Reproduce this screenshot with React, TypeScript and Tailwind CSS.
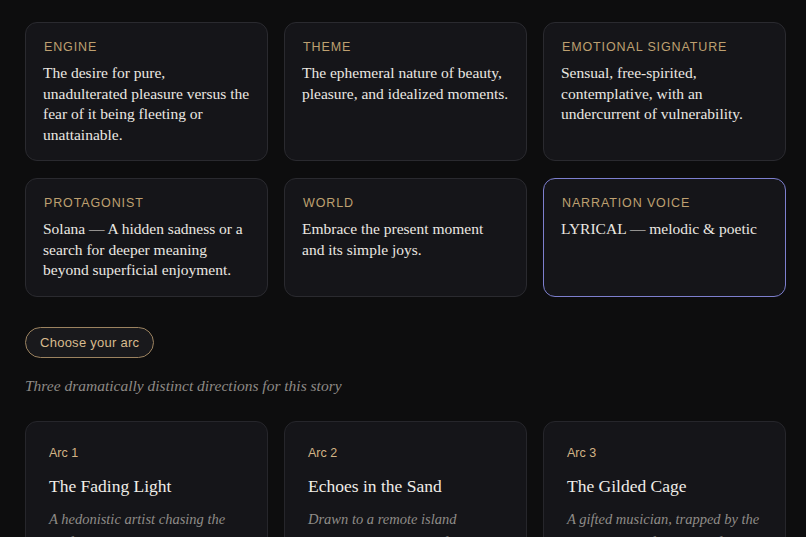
const serif = "font-['Georgia','Liberation_Serif',serif]"
const sans = "font-['Liberation_Sans','Helvetica',sans-serif]"

const traits = [
  {
    label: 'Engine',
    text: 'The desire for pure, unadulterated pleasure versus the fear of it being fleeting or unattainable.',
  },
  { label: 'Theme', text: 'The ephemeral nature of beauty, pleasure, and idealized moments.' },
  {
    label: 'Emotional Signature',
    text: 'Sensual, free-spirited, contemplative, with an undercurrent of vulnerability.',
  },
  {
    label: 'Protagonist',
    text: 'Solana — A hidden sadness or a search for deeper meaning beyond superficial enjoyment.',
  },
  { label: 'World', text: 'Embrace the present moment and its simple joys.' },
  { label: 'Narration Voice', text: 'LYRICAL — melodic & poetic', active: true },
]

const arcs = [
  {
    n: 1,
    title: 'The Fading Light',
    desc: 'A hedonistic artist chasing the perfect moment realizes that every sunset she paints is already gone.',
  },
  {
    n: 2,
    title: 'Echoes in the Sand',
    desc: 'Drawn to a remote island paradise, she searches for a joy that never seems to stay.',
  },
  {
    n: 3,
    title: 'The Gilded Cage',
    desc: 'A gifted musician, trapped by the expectations of a gilded life, longs to break free.',
  },
]

function TraitCard({ label, text, active }: { label: string; text: string; active?: boolean }) {
  return (
    <div
      className={`rounded-xl border bg-[#151519] px-[17px] pt-4 pb-[15px] ${
        active ? 'border-[#7d7fce]' : 'border-[#2a2a2f]'
      }`}
    >
      <div className={`${sans} px-px text-[12.5px] leading-4 uppercase tracking-[0.07em] text-[#bea070]`}>
        {label}
      </div>
      <p className={`${serif} mt-2 text-[15.5px] leading-[20.5px] text-[#ebe8e2]`}>{text}</p>
    </div>
  )
}

function ArcCard({ n, title, desc }: { n: number; title: string; desc: string }) {
  return (
    <div className="rounded-xl border border-[#26262b] bg-[#151519] px-[23px] pt-[23px] pb-6">
      <div className={`${sans} text-[12.5px] leading-4 text-[#d2b385]`}>Arc {n}</div>
      <h3 className={`${serif} mt-[13px] text-[17.5px] leading-6 text-[#f0ede8]`}>{title}</h3>
      <p className={`${serif} mt-[10px] text-[14.5px] italic leading-[23px] text-[#8f8c88]`}>{desc}</p>
    </div>
  )
}

export default function App() {
  return (
    <div className="h-screen overflow-hidden bg-[#0d0d0e] pl-[25px] pt-[22px]">
      <div className="grid w-[761px] grid-cols-3 gap-x-4 gap-y-[17px]">
        {traits.map((t) => (
          <TraitCard key={t.label} {...t} />
        ))}
      </div>

      <button
        className={`${sans} mt-[30px] rounded-full border border-[#9c8360] bg-[#19191c] px-[14px] py-[6px] text-[13px] leading-[17px] tracking-[0.02em] text-[#d8bb8e]`}
      >
        Choose your arc
      </button>

      <p className={`${serif} mt-[17px] text-[15.5px] leading-[22px] italic text-[#8d8a86]`}>
        Three dramatically distinct directions for this story
      </p>

      <div className="mt-6 grid w-[761px] grid-cols-3 gap-4">
        {arcs.map((a) => (
          <ArcCard key={a.n} {...a} />
        ))}
      </div>
    </div>
  )
}
